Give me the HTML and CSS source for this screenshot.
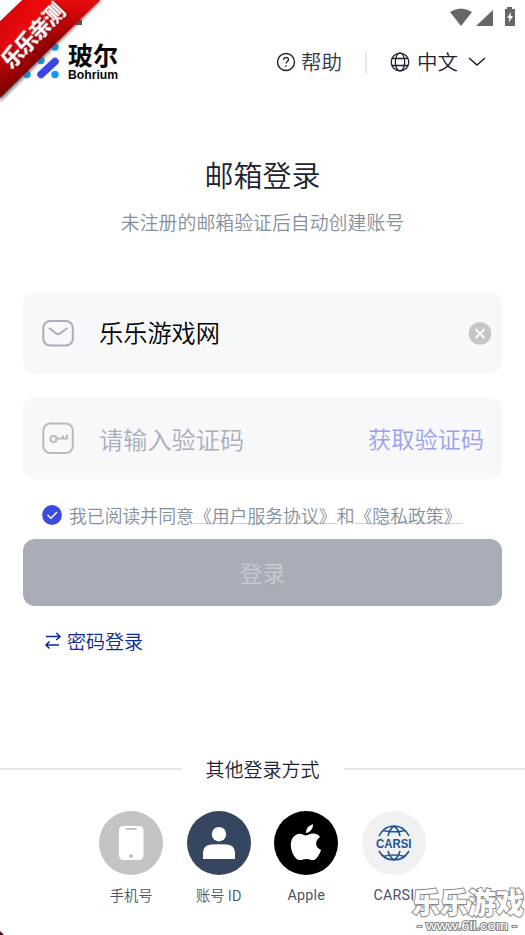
FILE: index.html
```html
<!DOCTYPE html>
<html lang="zh-CN">
<head>
<meta charset="utf-8">
<title>邮箱登录</title>
<link rel="stylesheet" href="styles.css">
</head>
<body>
<main class="screen">
  <div class="status">
    <svg width="68" height="20" viewBox="0 0 68 20" fill="#666">
      <path d="M0 4Q11-3 22 4L11 18Z"/><path d="M26 18L43 2V18Z"/>
      <path fill-rule="evenodd" d="M57 -1h5v2h3v17H55V1h2zM61 4l-4 6h2.500l-1 5 4.500-7h-2.500z"/>
    </svg>
  </div>
  <header class="header">
    <div class="brand">
      <svg width="36" height="36" viewBox="0 0 36 36">
        <g fill="#0a9dff"><circle cx="31" cy="4" r="3.700"/><circle cx="17" cy="17.500" r="3.700"/><circle cx="3" cy="31.500" r="3.700"/><circle cx="31" cy="31.500" r="3.700"/></g>
        <path d="M17 31.500L31 18.500" stroke="#3d46e5" stroke-width="7.500" stroke-linecap="round"/>
      </svg>
      <div class="wordmark"><span class="brand-cn">玻尔</span><span class="brand-en">Bohrium</span></div>
    </div>
    <div class="tools">
      <svg width="20" height="20" viewBox="0 0 20 20" fill="none" stroke="#1c2230" stroke-width="1.400"><circle cx="10" cy="10" r="8.500"/><path d="M7.600 8C7.600 4.500 12.600 4.700 12.500 7.900C12.400 9.600 10 9.500 10 11.500M10 13.200v1.500"/></svg>
      <span class="help">帮助</span>
      <i class="sep"></i>
      <svg width="20" height="20" viewBox="0 0 20 20" fill="none" stroke="#1c2230" stroke-width="1.300"><circle cx="10" cy="10" r="8.800"/><ellipse cx="10" cy="10" rx="4.700" ry="8.800"/><path d="M2 6.500H18M2 13.500H18"/></svg>
      <span class="lang">中文</span>
      <svg class="chev" width="18" height="10" viewBox="0 0 18 10" fill="none" stroke="#1c2230" stroke-width="1.600"><path d="M1 1L9 8L17 1"/></svg>
    </div>
  </header>
  <h1>邮箱登录</h1>
  <p class="sub">未注册的邮箱验证后自动创建账号</p>
  <div class="field">
    <svg width="34" height="34" viewBox="0 0 34 34" fill="none" stroke="#a9aebb" stroke-width="2"><rect x="2.300" y="5" width="29.500" height="24.500" rx="7"/><path d="M8 12L15.500 17.700Q17 18.700 18.500 17.700L26.500 12"/></svg>
    <span class="value">乐乐游戏网</span>
    <svg width="24" height="24" viewBox="0 0 24 24"><circle cx="12" cy="12.500" r="11.300" fill="#c6c6c6"/><path d="M7.500 8l9 9m0-9l-9 9" stroke="#fff" stroke-width="1.800"/></svg>
  </div>
  <div class="field code">
    <svg width="34" height="34" viewBox="0 0 34 34" fill="none" stroke="#b9bac2" stroke-width="2"><rect x="2.300" y="2.500" width="29.500" height="29.500" rx="7"/><circle cx="12.500" cy="18" r="3"/><path d="M15.500 17.500H26V13.800M22 17.500v-3"/></svg>
    <span class="value hint">请输入验证码</span>
    <span class="get">获取验证码</span>
  </div>
  <div class="terms">
    <svg width="20" height="20" viewBox="0 0 20 20"><circle cx="10" cy="10" r="9.900" fill="#3e49de"/><path d="M5.500 10L9 13.300L15 7" fill="none" stroke="#fff" stroke-width="1.500"/></svg>
    <span class="agree">我已阅读并同意<u>《用户服务协议》</u>和<u>《隐私政策》</u></span>
  </div>
  <button class="login">登录</button>
  <div class="switch">
    <svg width="18" height="18" viewBox="0 0 18 18" fill="none" stroke="#0a2a9c" stroke-width="1.500"><path d="M2 4.500H16M12.300 1L16 4.500L12.300 8M15 13H2M5.500 9.500L2 13L5.500 16.500"/></svg>
    <span>密码登录</span>
  </div>
  <div class="divider"><i></i><span>其他登录方式</span><i></i></div>
  <div class="methods">
    <div class="method">
      <svg width="64" height="64" viewBox="0 0 64 64"><circle cx="32" cy="32" r="32" fill="#c4c4c4"/><rect x="20" y="15" width="24.500" height="34" rx="4.500" fill="#fff"/><path d="M27 18h10.500" stroke="#c4c4c4" stroke-width="2"/><circle cx="32" cy="45" r="2.100" fill="#c4c4c4"/></svg>
      <span>手机号</span>
    </div>
    <div class="method">
      <svg width="64" height="64" viewBox="0 0 64 64"><circle cx="32" cy="32" r="32" fill="#364660"/><circle cx="32" cy="23.200" r="7.200" fill="#fff"/><path d="M16 48V41.500Q16.500 34 24 33.500Q32 32.800 40 33.500Q47.500 34 48 41.500V48Z" fill="#fff"/></svg>
      <span>账号 ID</span>
    </div>
    <div class="method">
      <svg width="64" height="64" viewBox="0 0 64 64"><circle cx="32" cy="32" r="32"/><path fill="#fff" d="M32 24.500C35 24 37 22 40 22.500C43 22.800 45 24.200 46 26C40.500 29.500 41 36.500 47 39C45.500 43.500 42.500 48.500 40 49C37 49.500 36 48 32.500 48C29 48 28 49.500 25 49C20 48 15 36.500 17.500 29.500C19 25 23.500 22 27.500 23C29.500 23.500 30.500 24.500 32 24.500ZM32 22C32 17.500 35 14.500 39 13.300C39.300 17.500 36 21.800 32 22Z"/></svg>
      <span class="latin">Apple</span>
    </div>
    <div class="method">
      <svg width="64" height="64" viewBox="0 0 64 64"><circle cx="32" cy="32" r="32" fill="#f1f1f1"/><g fill="none" stroke="#205493" stroke-width="1.600"><path d="M17 25Q22 15 32 15T47 25M26 25Q27.500 18 32 15Q36.500 18 38 25M21 19.500Q32 22 43 19.500M17 40Q22 49 32 49T47 40M26 40Q27.500 46 32 49Q36.500 46 38 40M21 45.500Q32 42.500 43 45.500"/></g><text x="14" y="36.500" textLength="35.500" lengthAdjust="spacingAndGlyphs" class="carsi">CARSI</text></svg>
      <span class="latin">CARSI</span>
    </div>
  </div>
  <svg class="ribbon" width="110" height="110" viewBox="0 0 110 110">
    <defs>
      <linearGradient id="red" gradientUnits="userSpaceOnUse" x1="12" y1="12" x2="50" y2="50"><stop offset="0" stop-color="#d70609"/><stop offset=".35" stop-color="#e80c10"/><stop offset="1" stop-color="#750002"/></linearGradient>
      <linearGradient id="glow" gradientUnits="userSpaceOnUse" x1="0" y1="90" x2="90" y2="0"><stop offset="0" stop-color="#700" stop-opacity=".4"/><stop offset=".5" stop-color="#f00" stop-opacity=".05"/><stop offset="1" stop-color="#ff1010" stop-opacity=".8"/></linearGradient>
      <filter id="soft"><feGaussianBlur stdDeviation="1.800"/></filter>
    </defs>
    <path d="M75 20h7v5h-7z" fill="#555"/>
    <path d="M24 0H102L0 102V23Z" fill="#555" opacity=".7" filter="url(#soft)"/>
    <path d="M22 0H100L0 98V21Z" fill="url(#red)"/><path d="M22 0H100L0 98V21Z" fill="url(#glow)"/>
    <path d="M0 0H22L0 21Z" fill="#fff"/>
    <g transform="translate(32.500 35) rotate(-46)"><text class="stamp" y="7.500" text-anchor="middle" textLength="80">乐乐亲测</text></g>
  </svg>
  <svg class="watermark" width="116" height="52" viewBox="0 0 116 52">
    <text class="mark" x="3" y="31" textLength="112" lengthAdjust="spacingAndGlyphs">乐乐游戏</text>
    <text class="url" x="8" y="47" textLength="100" lengthAdjust="spacingAndGlyphs">- www.6ll.com -</text>
  </svg>
  <svg class="corner" width="5" height="5" viewBox="0 0 5 5"><path d="M0 1L4 5H0Z" fill="#4b0d10"/></svg>
</main>
</body>
</html>
```
FILE: styles.css
```css
* { box-sizing: border-box; }
body { margin: 0; background: #fff; font-family: "Noto Sans CJK SC", sans-serif; font-weight: 350; color: #1c2230; }
svg { display: block; flex: none; overflow: visible; }
.screen { position: relative; width: 525px; height: 935px; overflow: hidden; white-space: nowrap; }
.status { height: 35px; padding: 8px 7px 0 0; display: flex; justify-content: flex-end; }
.header { height: 54px; padding: 0 39px 0 24px; display: flex; justify-content: space-between; }
.brand { display: flex; padding-top: 8px; gap: 8px; }
.wordmark { display: flex; flex-direction: column; color: #080808; }
.brand-cn { font-size: 25px; line-height: 25px; font-weight: 700; margin-top: -1px; }
.brand-en { font: 700 12.2px/12px "Liberation Sans", sans-serif; margin-top: 2px; }
.tools { display: flex; align-items: center; height: 54px; font-size: 20.5px; line-height: 30px; }
.tools span { margin-top: -2px; }
.tools svg { margin-top: -1px; }
.tools .help { margin-left: 5px; color: #303746; }
.sep { width: 2px; height: 23px; margin: 0 23px 0 23px; background: #e8e8ee; }
.tools .lang { margin-left: 7px; }
.tools .chev { margin-left: 10px; }
h1 { margin: 65px 0 0; font-size: 29px; line-height: 40px; font-weight: 350; text-align: center; }
.sub { margin: 14px 0 0; font-size: 18.9px; line-height: 28px; text-align: center; color: #858f9d; }
.field { height: 82px; margin: 56px 23px 0; padding: 0 10px 0 18px; display: flex; align-items: center; border-radius: 12px; background: #f7f8fa; }
.code { margin-top: 23px; padding-right: 18px; }
.value { flex: 1; margin: -3px 0 0 24px; font-size: 24.2px; line-height: 36px; color: #000; }
.hint { margin-top: 1px; color: #a9aebb; }
.get { font-size: 23.2px; line-height: 36px; color: #9ba1ed; }
.terms { height: 60px; padding: 12px 0 0 42px; display: flex; align-items: center; gap: 7px; }
.agree { font-size: 17.85px; line-height: 26px; color: #858f9d; }
.terms svg { margin-top: -1px; }
u { text-decoration: none; background: linear-gradient(#c9d2da, #c9d2da) 0 21px / 100% 1px no-repeat; }
.login { display: block; width: 479px; height: 67px; margin: 0 23px; padding: 0; border: 0; border-radius: 12px; background: #a9adb8; color: #c8cbd3; font: 350 23px/67px "Noto Sans CJK SC", sans-serif; }
.switch { display: flex; align-items: center; gap: 5px; height: 28px; margin: 21px 0 0 44px; font-size: 19px; line-height: 28px; color: #0a2a9c; }
.divider { height: 28px; margin-top: 100px; display: flex; align-items: center; gap: 24px; font-size: 19px; line-height: 28px; }
.divider span { margin-top: -1px; }
.divider i { flex: 1; height: 2px; background: #e6e6ed; }
.methods { display: flex; justify-content: center; gap: 23.6px; margin-top: 28px; }
.method { width: 64px; display: flex; flex-direction: column; align-items: center; font-size: 14.3px; line-height: 22px; color: #4a5568; }
.method span { margin-top: 9px; }
.latin { font-family: Roboto, sans-serif; font-weight: 400; letter-spacing: .2px; }
.carsi { font: 700 13px "Liberation Sans", sans-serif; fill: #205493; }
.ribbon { position: absolute; left: 0; top: 0; overflow: hidden; }
.stamp { font: 900 21px "Noto Sans CJK SC", sans-serif; fill: #fff; filter: drop-shadow(1px 2px 1px #7009); }
.watermark { position: absolute; left: 409px; top: 883px; }
.mark { font: 900 29px "Noto Sans CJK SC", sans-serif; fill: #fff; stroke: #888; stroke-width: 2px; paint-order: stroke; }
.url { font: 400 13px "Liberation Sans", sans-serif; fill: #fff; stroke: #888; stroke-width: 2px; paint-order: stroke; }
.corner { position: absolute; left: 0; bottom: 0; }
```
